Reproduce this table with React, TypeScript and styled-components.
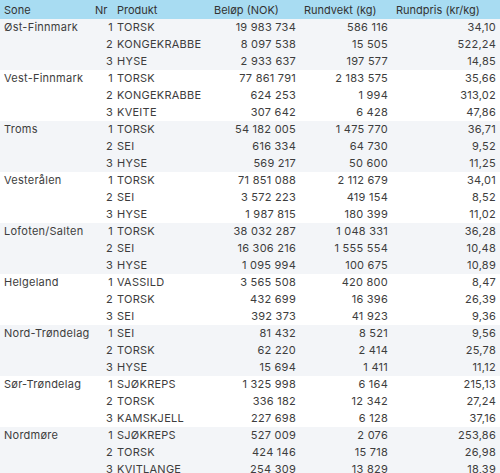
import React from "react";
import styled, { createGlobalStyle } from "styled-components";

const Global = createGlobalStyle`
  html, body { margin: 0; padding: 0; background: #ffffff; }
  body { font-family: Inter, "Open Sans", sans-serif; }
`;

type Row = [string, string, string, string, string];
type Group = { sone: string; rows: Row[] };

const data: Group[] = [
  { sone: "Øst-Finnmark", rows: [
    ["1", "TORSK", "19 983 734", "586 116", "34,10"],
    ["2", "KONGEKRABBE", "8 097 538", "15 505", "522,24"],
    ["3", "HYSE", "2 933 637", "197 577", "14,85"],
  ]},
  { sone: "Vest-Finnmark", rows: [
    ["1", "TORSK", "77 861 791", "2 183 575", "35,66"],
    ["2", "KONGEKRABBE", "624 253", "1 994", "313,02"],
    ["3", "KVEITE", "307 642", "6 428", "47,86"],
  ]},
  { sone: "Troms", rows: [
    ["1", "TORSK", "54 182 005", "1 475 770", "36,71"],
    ["2", "SEI", "616 334", "64 730", "9,52"],
    ["3", "HYSE", "569 217", "50 600", "11,25"],
  ]},
  { sone: "Vesterålen", rows: [
    ["1", "TORSK", "71 851 088", "2 112 679", "34,01"],
    ["2", "SEI", "3 572 223", "419 154", "8,52"],
    ["3", "HYSE", "1 987 815", "180 399", "11,02"],
  ]},
  { sone: "Lofoten/Salten", rows: [
    ["1", "TORSK", "38 032 287", "1 048 331", "36,28"],
    ["2", "SEI", "16 306 216", "1 555 554", "10,48"],
    ["3", "HYSE", "1 095 994", "100 675", "10,89"],
  ]},
  { sone: "Helgeland", rows: [
    ["1", "VASSILD", "3 565 508", "420 800", "8,47"],
    ["2", "TORSK", "432 699", "16 396", "26,39"],
    ["3", "SEI", "392 373", "41 923", "9,36"],
  ]},
  { sone: "Nord-Trøndelag", rows: [
    ["1", "SEI", "81 432", "8 521", "9,56"],
    ["2", "TORSK", "62 220", "2 414", "25,78"],
    ["3", "HYSE", "15 694", "1 411", "11,12"],
  ]},
  { sone: "Sør-Trøndelag", rows: [
    ["1", "SJØKREPS", "1 325 998", "6 164", "215,13"],
    ["2", "TORSK", "336 182", "12 342", "27,24"],
    ["3", "KAMSKJELL", "227 698", "6 128", "37,16"],
  ]},
  { sone: "Nordmøre", rows: [
    ["1", "SJØKREPS", "527 009", "2 076", "253,86"],
    ["2", "TORSK", "424 146", "15 718", "26,98"],
    ["3", "KVITLANGE", "254 309", "13 829", "18,39"],
  ]},
];

const Table = styled.table`
  width: 500px;
  border-collapse: collapse;
  table-layout: fixed;
  font-family: Inter, "Open Sans", sans-serif;
  font-size: 11px;
  color: #3d3d3d;
`;

const HeadRow = styled.tr`
  background: #a8dcf2;
  height: 19px;
`;

const Th = styled.th`
  font-weight: 400;
  text-align: left;
  padding: 0 4px;
  white-space: nowrap;
  color: #333;
`;

const BodyGroup = styled.tbody<{ $shade: boolean }>`
  background: ${(p) => (p.$shade ? "#f3f5f8" : "#ffffff")};
`;

const Tr = styled.tr`
  height: 17px;
`;

const Td = styled.td<{ $align?: "left" | "right"; $tight?: boolean }>`
  padding: ${(p) => (p.$tight ? "0 0 0 3px" : "0 4px")};
  text-align: ${(p) => p.$align ?? "left"};
  white-space: nowrap;
  vertical-align: middle;
  line-height: 17px;
  letter-spacing: 0.25px;
`;

export default function App() {
  return (
    <>
      <Global />
      <Table>
        <colgroup>
          <col style={{ width: 91 }} />
          <col style={{ width: 22 }} />
          <col style={{ width: 97 }} />
          <col style={{ width: 90 }} />
          <col style={{ width: 92 }} />
          <col style={{ width: 108 }} />
        </colgroup>
        <thead>
          <HeadRow>
            <Th>Sone</Th>
            <Th>Nr</Th>
            <Th>Produkt</Th>
            <Th>Beløp (NOK)</Th>
            <Th>Rundvekt (kg)</Th>
            <Th>Rundpris (kr/kg)</Th>
          </HeadRow>
        </thead>
        {data.map((g, gi) => (
          <BodyGroup key={g.sone} $shade={gi % 2 === 0}>
            {g.rows.map((r, ri) => (
              <Tr key={ri}>
                <Td>{ri === 0 ? g.sone : ""}</Td>
                <Td $align="right" $tight>{r[0]}</Td>
                <Td>{r[1]}</Td>
                <Td $align="right">{r[2]}</Td>
                <Td $align="right">{r[3]}</Td>
                <Td $align="right">{r[4]}</Td>
              </Tr>
            ))}
          </BodyGroup>
        ))}
      </Table>
    </>
  );
}
